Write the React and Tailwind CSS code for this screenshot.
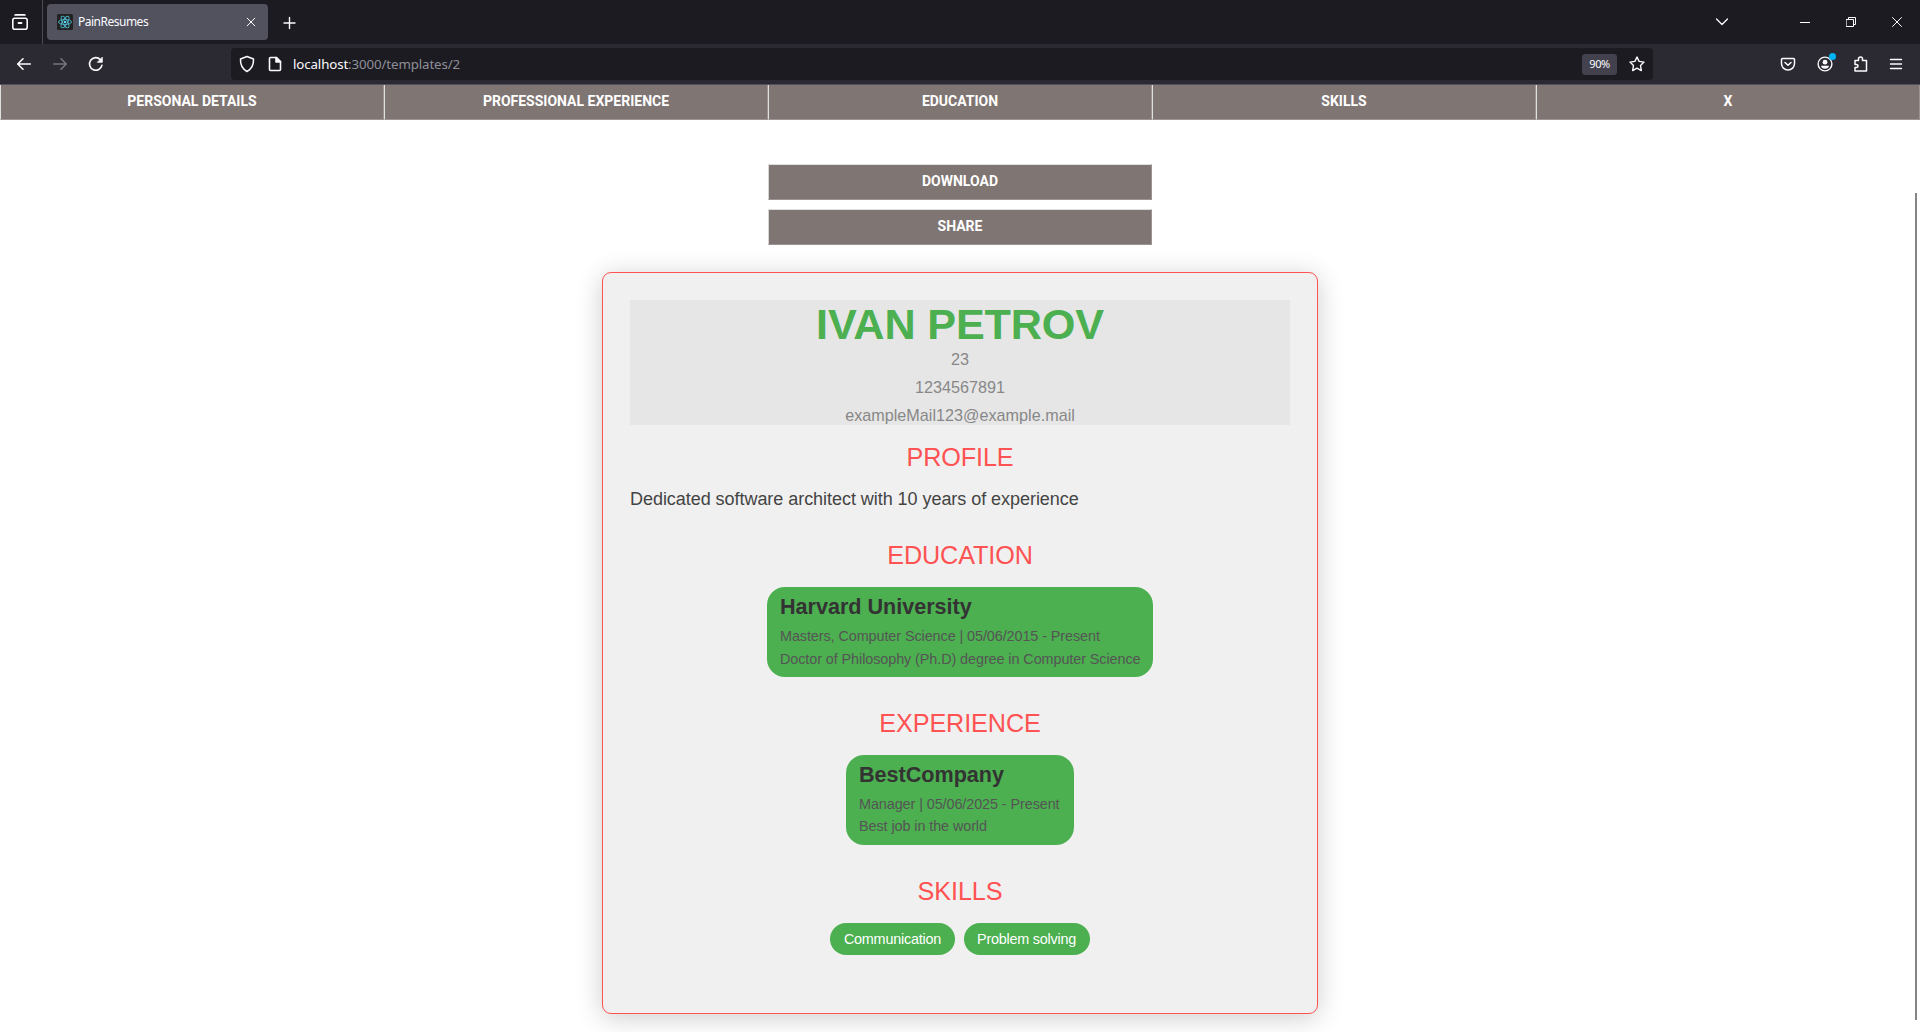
const ui = "font-['Noto_Sans',sans-serif]";

function Stroke({ w = 20, h = 20, sw = 1.4, color = '#fbfbfe', className = '', children }) {
  return (
    <svg
      width={w}
      height={h}
      viewBox={`0 0 ${w} ${h}`}
      fill="none"
      stroke={color}
      strokeWidth={sw}
      strokeLinecap="round"
      strokeLinejoin="round"
      className={`block shrink-0 ${className}`}
    >
      {children}
    </svg>
  );
}

function TitleBar() {
  return (
    <div className="flex h-11 items-stretch bg-[#1c1b22]">
      <div className="flex w-[43px] items-center border-r border-[#4b4a54] pl-[10px]">
        <Stroke sw={1.6}>
          <path d="M5 3Q5.500 2.900 6 2.900H14Q14.500 2.900 15 3" />
          <rect x="2.800" y="6.300" width="14.400" height="11" rx="2" />
          <path d="M8.500 11H11.500" strokeWidth="1.800" />
        </Stroke>
      </div>
      <div className="my-1 ml-1 flex h-9 w-[221px] items-center rounded-[4px] bg-[#52525e] pl-[10px]">
        <svg width="16" height="16" viewBox="0 0 16 16" fill="none" stroke="#4fb8d0" strokeWidth="0.900" className="shrink-0">
          <rect width="16" height="16" rx="1.500" fill="#222" stroke="none" />
          <ellipse cx="8" cy="8" rx="6.500" ry="2.500" />
          <ellipse cx="8" cy="8" rx="6.500" ry="2.500" transform="rotate(60 8 8)" />
          <ellipse cx="8" cy="8" rx="6.500" ry="2.500" transform="rotate(120 8 8)" />
          <circle cx="8" cy="8" r="1.300" fill="#61dafb" stroke="none" />
        </svg>
        <span className="ml-[5px] text-[12px] tracking-[-0.5px] text-[#fbfbfe]">PainResumes</span>
        <Stroke w={10} h={10} sw={1} className="ml-auto mr-[12px]">
          <path d="M1.200 1.200L8.800 8.800M8.800 1.200L1.200 8.800" />
        </Stroke>
      </div>
      <Stroke w={14} h={14} sw={1.4} className="ml-[14px] mt-4">
        <path d="M7.500 1.500V12.500M2 7H13" />
      </Stroke>
      <div className="ml-auto flex items-center">
        <Stroke w={14} h={10} sw={1.3} className="mr-[71px]">
          <path d="M1.500 2L7 7.500L12.500 2" />
        </Stroke>
        <div className="mr-[36px] h-px w-[10px] bg-white" />
        <Stroke w={10} h={10} sw={1} className="mr-[36px]">
          <path d="M0.500 2.500H7.500V9.500H0.500ZM2.500 2.500V0.500H9.500V7.500H7.500" strokeLinejoin="miter" />
        </Stroke>
        <Stroke w={10} h={10} sw={1} className="mr-[18px]">
          <path d="M0.500 0.500L9.500 9.500M9.500 0.500L0.500 9.500" />
        </Stroke>
      </div>
    </div>
  );
}

function AddressBar() {
  return (
    <div className="flex h-[41px] items-center border-b border-[#52525e] bg-[#2b2a33]">
      <Stroke w={16} h={16} sw={1.6} className="ml-4">
        <path d="M14.300 8H2M7 2.800L1.700 8L7 13.200" />
      </Stroke>
      <Stroke w={16} h={16} sw={1.6} color="#77767e" className="ml-[20px]">
        <path d="M1.700 8H14M9 2.800L14.300 8L9 13.200" />
      </Stroke>
      <Stroke w={16} h={16} sw={1.6} className="ml-[20px]">
        <path d="M14 9.200A6.300 6.300 0 1 1 12.400 3.600" />
        <path d="M14.300 1.500V6.300H9.700Z" fill="#fbfbfe" strokeWidth="0.800" />
      </Stroke>
      <div className="ml-[127px] flex h-8 w-[1422px] items-center rounded-[4px] bg-[#1c1b22]">
        <Stroke w={16} h={18} sw={1.5} className="ml-2">
          <path d="M8 1.500L14.500 4Q15 12.500 8 16.500Q1 12.500 1.500 4Z" />
        </Stroke>
        <Stroke w={14} h={16} sw={1.6} className="ml-[13px]">
          <path d="M2.500 1.500H8.500L12.500 5.500V13.500Q12.500 14.500 11.500 14.500H2.500Q1.500 14.500 1.500 13.500V2.500Q1.500 1.500 2.500 1.500Z" />
          <path d="M8 1.500V6H12.500Z" fill="#fbfbfe" />
        </Stroke>
        <span className="ml-[11px] pt-[2px] text-[13.3px] tracking-[-0.12px] text-[#8f8f98]">
          <span className="text-[#fbfbfe]">localhost</span>:3000/templates/2
        </span>
        <span className="ml-auto flex h-[21px] w-[35px] items-center justify-center rounded-[3px] bg-[#42414d] pt-px text-[11px] tracking-[-0.4px] text-[#fbfbfe]">
          90%
        </span>
        <Stroke w={16} h={16} sw={1.4} className="ml-3 mr-2">
          <path d="M8 1L10.100 5.400L15 6.100L11.500 9.500L12.300 14.600L8 12.200L3.700 14.600L4.500 9.500L1 6.100L5.900 5.400Z" />
        </Stroke>
      </div>
      <Stroke w={16} h={16} sw={1.5} className="ml-[127px]">
        <path d="M2.500 2.500H13.500Q14.500 2.500 14.500 3.500V7.500A6.500 6.500 0 0 1 1.500 7.500V3.500Q1.500 2.500 2.500 2.500ZM5 6.500L8 9.300L11 6.500" />
      </Stroke>
      <div className="relative ml-[21px]">
        <Stroke w={16} h={16} sw={1.4}>
          <circle cx="8" cy="8" r="6.900" />
          <circle cx="8" cy="6.200" r="2.400" fill="#fbfbfe" stroke="none" />
          <path d="M4 9.800H12Q11.500 12.800 8 12.800T4 9.800Z" fill="#fbfbfe" stroke="none" />
        </Stroke>
        <div className="absolute left-[12px] top-[-3px] h-[7px] w-[7px] rounded-full bg-[#00b3f4]" />
      </div>
      <Stroke w={16} h={16} sw={1.5} className="ml-[20px]">
        <path d="M2 4.500H5.500V3A2 2 0 0 1 9.500 3V4.500H13.500V15H2V11.500H3.500A1.500 1.500 0 0 0 3.500 8.500H2Z" />
      </Stroke>
      <Stroke w={16} h={16} sw={1.4} className="ml-[19px]">
        <path d="M2.500 3.500H13.500M2.500 8H13.500M2.500 12.500H13.500" />
      </Stroke>
    </div>
  );
}

const buttonText = "font-['Roboto',sans-serif] text-center text-[14px] font-bold text-white";

function TabLink({ children }) {
  return (
    <div className={`h-[35px] border border-t-0 border-b-[#9a9494] border-l-[#e0e0e0] border-r-[#9a9494] bg-[#7f7573] pt-[6px] leading-5 ${buttonText}`}>
      {children}
    </div>
  );
}

function ActionButton({ children }) {
  return (
    <div className={`h-9 w-[384px] border border-b-[#9a9494] border-l-[#d6d6d6] border-r-[#9a9494] border-t-[#e0e0e0] bg-[#7f7573] pt-[6px] leading-5 ${buttonText}`}>
      {children}
    </div>
  );
}

function Heading({ children }) {
  return <h2 className="text-center text-[25.2px] leading-[30px] tracking-[-0.1px] text-[#ff5252]">{children}</h2>;
}

function Entry({ title, meta, note, className, noteClass = '' }) {
  return (
    <div className={`mx-auto mt-[17px] h-[90px] whitespace-nowrap rounded-[18px] bg-[#4caf50] px-[13px] pt-[6px] text-[14.4px] leading-[22px] tracking-[-0.08px] text-[#555] ${className}`}>
      <h3 className="text-[21.6px] font-bold leading-[27px] tracking-[-0.02px] text-[#333]">{title}</h3>
      <p className="mt-[5px]">{meta}</p>
      <p className={noteClass}>{note}</p>
    </div>
  );
}

function Resume() {
  return (
    <div className="h-[742px] w-[716px] rounded-[9px] border border-[#ff5252] bg-[#f0f0f0] px-[27px] pt-[27px] shadow-[0_4px_27px_rgba(0,0,0,0.2)]">
      <div className="h-[125px] bg-[#e6e6e6] text-center text-[16.2px] leading-7 text-[#888]">
        <h1 className="h-[45px] pt-[2px] text-[43.2px] font-bold leading-[45px] tracking-[-0.15px] text-[#4caf50]">IVAN PETROV</h1>
        <p>23</p>
        <p>1234567891</p>
        <p>exampleMail123@example.mail</p>
      </div>
      <div className="mt-[17px]">
        <Heading>PROFILE</Heading>
      </div>
      <p className="mt-[13px] text-[18px] leading-7 tracking-[-0.045px] text-[#444]">Dedicated software architect with 10 years of experience</p>
      <div className="mt-[27px]">
        <Heading>EDUCATION</Heading>
        <Entry
          className="w-[386px]"
          noteClass="pt-px"
          title="Harvard University"
          meta="Masters, Computer Science | 05/06/2015 - Present"
          note="Doctor of Philosophy (Ph.D) degree in Computer Science"
        />
      </div>
      <div className="mt-[31px]">
        <Heading>EXPERIENCE</Heading>
        <Entry className="w-[228px]" title="BestCompany" meta="Manager | 05/06/2025 - Present" note="Best job in the world" />
      </div>
      <div className="mt-[31px]">
        <Heading>SKILLS</Heading>
        <div className="mt-[17px] flex justify-center gap-[9px] text-[14.4px] leading-8 tracking-[-0.22px] text-white">
          <span className="h-8 rounded-full bg-[#4caf50] px-[13.5px]">Communication</span>
          <span className="h-8 rounded-full bg-[#4caf50] px-[13.5px]">Problem solving</span>
        </div>
      </div>
    </div>
  );
}

export default function App() {
  return (
    <div className="flex h-[1032px] w-[1920px] flex-col overflow-hidden bg-white font-['Liberation_Sans',Arial,sans-serif]">
      <header className={ui}>
        <TitleBar />
        <AddressBar />
      </header>
      <nav className="grid grid-cols-5">
        <TabLink>PERSONAL DETAILS</TabLink>
        <TabLink>PROFESSIONAL EXPERIENCE</TabLink>
        <TabLink>EDUCATION</TabLink>
        <TabLink>SKILLS</TabLink>
        <TabLink>X</TabLink>
      </nav>
      <main className="relative flex grow flex-col items-center pt-11">
        <div className="mb-[27px] flex flex-col gap-[9px]">
          <ActionButton>DOWNLOAD</ActionButton>
          <ActionButton>SHARE</ActionButton>
        </div>
        <Resume />
        <div className="absolute right-[3px] top-[73px] h-[827px] w-[2px] bg-[#858585]" />
      </main>
    </div>
  );
}
